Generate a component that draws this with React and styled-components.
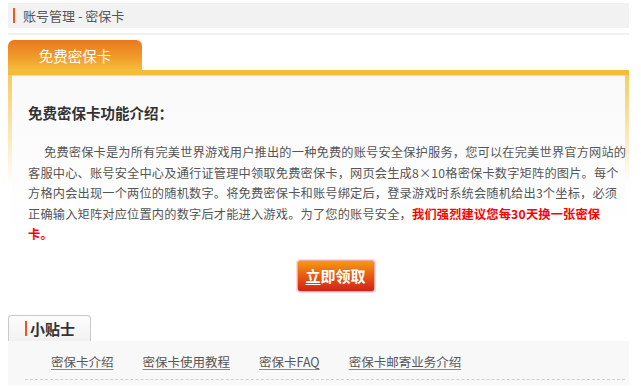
import React from 'react';
import styled, { createGlobalStyle } from 'styled-components';

const GlobalStyle = createGlobalStyle`
  body {
    margin: 0;
    background: #fff;
    font-family: "Noto Sans CJK SC", "Liberation Sans", sans-serif;
    font-size: 12.5px;
    color: #555;
  }
`;

const Page = styled.div`
  width: 621px;
  padding: 3px 0 0 8px;
`;

const Crumb = styled.div`
  height: 25px;
  background: #f2f2f2;
  display: flex;
  align-items: center;
  padding-left: 5px;
  gap: 8px;
  font-size: 13px;
  color: #555;
  white-space: pre;
`;

const CrumbMark = styled.span`
  width: 2px;
  height: 15px;
  background: #f0561e;
`;

const Rule = styled.div`
  height: 2px;
  margin-top: 5px;
  background: #f1f1f1;
`;

const TabRow = styled.div`
  margin-top: 5px;
  display: flex;
`;

const OrangeTab = styled.div`
  width: 134px;
  height: 30px;
  border-radius: 6px 6px 0 0;
  background: linear-gradient(#e8781c, #f09a2a 55%, #f5bd3c);
  color: #fff;
  font-size: 14.5px;
  display: flex;
  align-items: center;
  justify-content: center;
`;

const Frame = styled.div`
  border-top: 5px solid #f4bc3a;
  padding: 0 4px;
  background: linear-gradient(#f7cd60, #fbe3a8 50px, #fff 110px);
`;

const Inner = styled.div`
  background: linear-gradient(#f9f9f9, #fff 160px);
  border-top: 1px solid #fadc8e;
  padding: 27px 0 12px 16px;
`;

const Heading = styled.h3`
  margin: 0;
  font-size: 14.5px;
  font-weight: bold;
  color: #333;
  line-height: 20px;
`;

const Para = styled.p`
  margin: 19px 0 0;
  line-height: 20.5px;
  font-size: 12.2px;
  letter-spacing: 0.2px;
  color: #555;
  white-space: nowrap;
`;

const Indent = styled.span`
  display: inline-block;
  width: 16px;
`;

const Warn = styled.span`
  color: #f00;
  font-weight: bold;
`;

const ButtonRow = styled.div`
  display: flex;
  justify-content: center;
  margin-top: 15px;
  padding-left: 18px;
`;

const GetButton = styled.button`
  width: 78px;
  height: 32px;
  border: 1px solid #f3a9a2;
  border-radius: 3px;
  box-shadow: 0 0 0 1px #fbdcd8;
  background: linear-gradient(#f59a12, #e65a14 50%, #d0221a);
  color: #fff;
  font-family: inherit;
  font-size: 15px;
  font-weight: bold;
  cursor: pointer;
  padding: 0;

  u {
    text-decoration-thickness: 1px;
    text-underline-offset: 2px;
  }
`;

const TipsTabRow = styled.div`
  margin-top: 11px;
  display: flex;
`;

const GrayTab = styled.div`
  width: 83px;
  height: 26px;
  border: 1px solid #c9c9c9;
  border-bottom: none;
  border-radius: 4px 4px 0 0;
  background: linear-gradient(#fdfdfd, #f1f1f1);
  display: flex;
  align-items: center;
  padding-left: 16px;
  box-sizing: border-box;
  gap: 3px;
  font-size: 15px;
  font-weight: bold;
  color: #333;
`;

const TipsMark = styled.span`
  width: 2px;
  height: 15px;
  background: #f0561e;
`;

const TipsPanel = styled.div`
  background: #f8f8f8;
  padding: 10px 4px 5px 17px;
`;

const Links = styled.div`
  display: flex;
  gap: 29px;
  padding-left: 26px;
  height: 22px;
  align-items: center;
`;

const TipLink = styled.a`
  color: #555;
  font-size: 12.5px;
  text-decoration: underline;
  text-decoration-color: #888;
  text-underline-offset: 2px;
`;

const Dashed = styled.div`
  margin-top: 6px;
  border-top: 1px dashed #cfcfcf;
`;

const tips = ['密保卡介绍', '密保卡使用教程', '密保卡FAQ', '密保卡邮寄业务介绍'];

export default function App() {
  return (
    <>
      <GlobalStyle />
      <Page>
        <Crumb>
          <CrumbMark />
          <span>账号管理 - 密保卡</span>
        </Crumb>
        <Rule />
        <TabRow>
          <OrangeTab>免费密保卡</OrangeTab>
        </TabRow>
        <Frame>
          <Inner>
            <Heading>免费密保卡功能介绍：</Heading>
            <Para>
              <Indent />
              免费密保卡是为所有完美世界游戏用户推出的一种免费的账号安全保护服务，您可以在完美世界官方网站的
              <br />
              客服中心、账号安全中心及通行证管理中领取免费密保卡，网页会生成8×10格密保卡数字矩阵的图片。每个
              <br />
              方格内会出现一个两位的随机数字。将免费密保卡和账号绑定后，登录游戏时系统会随机给出3个坐标，必须
              <br />
              正确输入矩阵对应位置内的数字后才能进入游戏。为了您的账号安全，
              <Warn>
                我们强烈建议您每30天换一张密保
                <br />
                卡。
              </Warn>
            </Para>
            <ButtonRow>
              <GetButton>
                <u>立</u>即领取
              </GetButton>
            </ButtonRow>
          </Inner>
        </Frame>
        <TipsTabRow>
          <GrayTab>
            <TipsMark />
            小贴士
          </GrayTab>
        </TipsTabRow>
        <TipsPanel>
          <Links>
            {tips.map((t) => (
              <TipLink key={t} href="#">
                {t}
              </TipLink>
            ))}
          </Links>
          <Dashed />
        </TipsPanel>
      </Page>
    </>
  );
}
